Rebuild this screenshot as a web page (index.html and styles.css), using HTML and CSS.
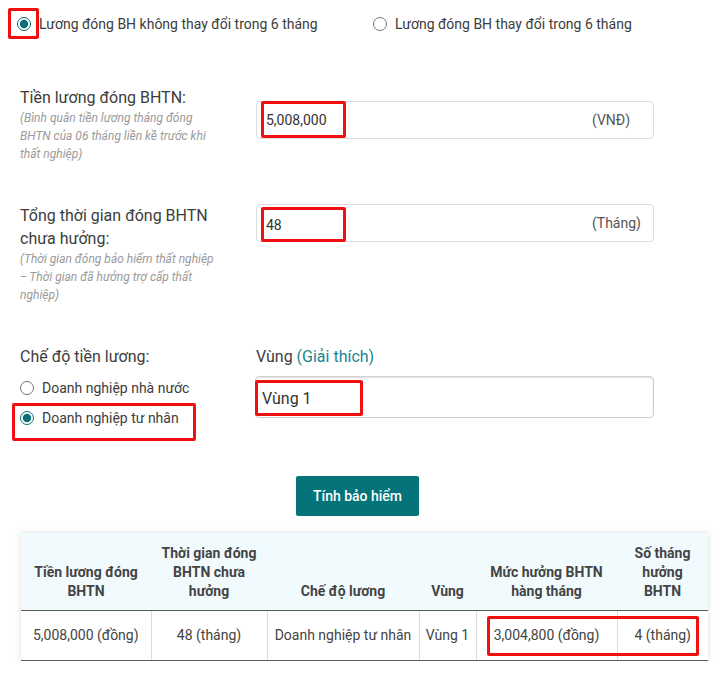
FILE: index.html
```html
<!DOCTYPE html>
<html lang="vi">
<head>
<meta charset="utf-8">
<title>Tính bảo hiểm thất nghiệp</title>
<link rel="stylesheet" href="styles.css">
</head>
<body>
<div class="page">
  <div class="mode-row">
    <label class="opt">
      <span class="hl-radio"><input type="radio" name="mode" checked></span>
      <span class="opt-text">Lương đóng BH không thay đổi trong 6 tháng</span>
    </label>
    <label class="opt">
      <input type="radio" name="mode">
      <span class="opt-text gap">Lương đóng BH thay đổi trong 6 tháng</span>
    </label>
  </div>

  <div class="field">
    <div class="lbl">
      <div class="lbl-main">Tiền lương đóng BHTN:</div>
      <div class="note">(Bình quân tiền lương tháng đóng BHTN của 06 tháng liền kề trước khi thất nghiệp)</div>
    </div>
    <div class="ctl shift">
      <div class="input">
        <div class="val"><span class="hl-val">5,008,000</span></div>
        <div class="unit">(VNĐ)</div>
      </div>
    </div>
  </div>

  <div class="field">
    <div class="lbl">
      <div class="lbl-main">Tổng thời gian đóng BHTN chưa hưởng:</div>
      <div class="note">(Thời gian đóng bảo hiểm thất nghiệp − Thời gian đã hưởng trợ cấp thất nghiệp)</div>
    </div>
    <div class="ctl">
      <div class="input">
        <div class="val"><span class="hl-val lower">48</span></div>
        <div class="unit">(Tháng)</div>
      </div>
    </div>
  </div>

  <div class="field">
    <div class="lbl">
      <div class="lbl-main">Chế độ tiền lương:</div>
      <label class="radio-line first"><input type="radio" name="regime"><span>Doanh nghiệp nhà nước</span></label>
      <div class="hl-box">
        <label class="radio-line"><input type="radio" name="regime" checked><span>Doanh nghiệp tư nhân</span></label>
      </div>
    </div>
    <div class="ctl">
      <div class="lbl-main">Vùng <span class="link">(Giải thích)</span></div>
      <div class="select"><span class="hl-select">Vùng 1</span></div>
    </div>
  </div>

  <div class="actions">
    <button class="btn" type="button">Tính bảo hiểm</button>
  </div>

  <div class="result">
    <table>
      <colgroup>
        <col class="c1"><col class="c2"><col class="c3"><col class="c4"><col class="c5"><col class="c6">
      </colgroup>
      <thead>
        <tr>
          <th>Tiền lương đóng BHTN</th>
          <th>Thời gian đóng BHTN chưa hưởng</th>
          <th>Chế độ lương</th>
          <th>Vùng</th>
          <th>Mức hưởng BHTN hàng tháng</th>
          <th>Số tháng hưởng BHTN</th>
        </tr>
      </thead>
      <tbody>
        <tr>
          <td>5,008,000 (đồng)</td>
          <td>48 (tháng)</td>
          <td>Doanh nghiệp tư nhân</td>
          <td>Vùng 1</td>
          <td>3,004,800 (đồng)</td>
          <td>4 (tháng)</td>
        </tr>
      </tbody>
    </table>
    <div class="hl-cells"></div>
  </div>
</div>
</body>
</html>
```
FILE: styles.css
```css
* { box-sizing: border-box; }
html, body { margin: 0; padding: 0; background: #fff; }
body {
  font-family: Roboto, "Noto Sans", "Liberation Sans", sans-serif;
  color: #3c3c3c;
  width: 726px;
}
.page { padding-top: 8px; }

input[type="radio"] {
  width: 14px;
  height: 14px;
  margin: 0;
  accent-color: #0b6f77;
  flex: none;
}

/* top mode row */
.mode-row {
  display: grid;
  grid-template-columns: 365px auto;
  padding-left: 8px;
  align-items: center;
}
.opt {
  display: flex;
  align-items: center;
  font-size: 14px;
  line-height: 20px;
  color: #3c3c3c;
}
.opt-text.gap { margin-left: 8px; }
.hl-radio {
  width: 31px;
  height: 31px;
  border: 3px solid #f01010;
  border-radius: 2px;
  display: flex;
  align-items: center;
  justify-content: center;
}

/* fields */
.field {
  display: grid;
  grid-template-columns: 200px 398px;
  column-gap: 36px;
  padding-left: 20px;
  margin-top: 41px;
}
.mode-row + .field { margin-top: 47px; }
.lbl-main {
  font-size: 16px;
  line-height: 23px;
  color: #3c3c3c;
}
.note {
  font-size: 12px;
  line-height: 18px;
  font-style: italic;
  color: #9a9a9a;
}
.ctl.shift { padding-top: 15px; }

.input {
  display: flex;
  height: 38px;
  border: 1px solid #dcdcdc;
  border-radius: 4px;
  padding-left: 4px;
}
.val { flex: 1; display: flex; }
.hl-val {
  display: flex;
  align-items: center;
  width: 85px;
  height: 37px;
  margin-top: -1px;
  border: 3px solid #f01010;
  border-radius: 2px;
  padding-left: 2px;
  font-size: 14px;
  color: #333;
}
.hl-val.lower { margin-top: 2px; height: 35px; }
.unit {
  width: 61px;
  display: flex;
  align-items: center;
  font-size: 14px;
  color: #555;
}

.radio-line {
  display: flex;
  align-items: center;
  gap: 8px;
  font-size: 14px;
  line-height: 20px;
  color: #3c3c3c;
}
.radio-line.first { margin-top: 10px; }
.hl-box {
  margin: 5px 0 0 -8px;
  width: 184px;
  border: 3px solid #f01010;
  border-radius: 2px;
  padding: 2px 0 10px 5px;
}

.link { color: #1b8490; }
.select {
  margin-top: 8px;
  margin-left: -1px;
  height: 42px;
  border: 1px solid #cfcfcf;
  border-radius: 4px;
  box-shadow: inset 0 1px 2px rgba(0,0,0,0.12);
  padding-top: 3px;
}
.hl-select {
  display: flex;
  align-items: center;
  margin-left: -1px;
  width: 108px;
  height: 36px;
  border: 3px solid #f01010;
  border-radius: 2px;
  padding-left: 4px;
  font-size: 16px;
  color: #333;
}

/* button */
.actions {
  display: flex;
  justify-content: center;
  width: 715px;
  margin-top: 35px;
}
.btn {
  height: 40px;
  width: 123px;
  background: #04747a;
  color: #fff;
  border: none;
  border-radius: 2px;
  font-family: inherit;
  font-size: 14px;
  font-weight: 500;
  padding: 0;
}

/* table */
.result {
  position: relative;
  width: 687px;
  margin: 17px 0 0 21px;
  box-shadow: 0 0 6px rgba(0,0,0,0.14);
}
table {
  width: 100%;
  border-collapse: collapse;
  table-layout: fixed;
}
col.c1 { width: 130px; }
col.c2 { width: 116px; }
col.c3 { width: 152px; }
col.c4 { width: 57px; }
col.c5 { width: 141px; }
col.c6 { width: 91px; }
th {
  background: #f1fbfe;
  font-size: 14px;
  font-weight: 700;
  line-height: 19px;
  color: #444;
  vertical-align: bottom;
  text-align: center;
  padding: 11px 6px 9px;
  border-bottom: 1px solid #5a5a5a;
}
td {
  font-size: 14px;
  line-height: 20px;
  color: #444;
  text-align: center;
  white-space: nowrap;
  padding: 14px 4px 15px;
  border-bottom: 1px solid #5a5a5a;
  border-right: 1px solid #dcdcdc;
}
td:last-child { border-right: none; }
.hl-cells {
  position: absolute;
  left: 466px;
  top: 83px;
  width: 212px;
  height: 40px;
  border: 3px solid #f01010;
  border-radius: 2px;
}
```
